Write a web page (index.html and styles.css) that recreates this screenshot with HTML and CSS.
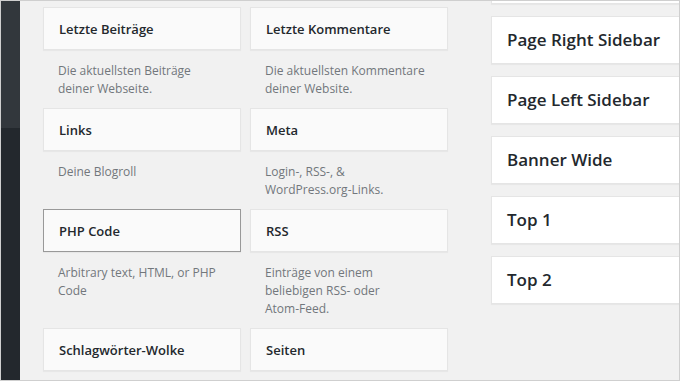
FILE: index.html
```html
<!DOCTYPE html>
<html lang="de">

<head>
  <meta charset="UTF-8">
  <title>Widgets</title>
  <link rel="stylesheet" href="styles.css">
</head>

<body>
  <div class="screen">
    <div class="adminmenu"></div>
    <div class="content">
      <div class="available">
        <div class="widget">
          <div class="widget-top"><h3>Letzte Beiträge</h3></div>
          <p class="desc">Die aktuellsten Beiträge<br>deiner Webseite.</p>
        </div>
        <div class="widget">
          <div class="widget-top"><h3>Letzte Kommentare</h3></div>
          <p class="desc">Die aktuellsten Kommentare<br>deiner Website.</p>
        </div>
        <div class="widget">
          <div class="widget-top"><h3>Links</h3></div>
          <p class="desc">Deine Blogroll</p>
        </div>
        <div class="widget">
          <div class="widget-top"><h3>Meta</h3></div>
          <p class="desc">Login-, RSS-, &amp;<br>WordPress.org-Links.</p>
        </div>
        <div class="widget">
          <div class="widget-top hover"><h3>PHP Code</h3></div>
          <p class="desc">Arbitrary text, HTML, or PHP<br>Code</p>
        </div>
        <div class="widget">
          <div class="widget-top"><h3>RSS</h3></div>
          <p class="desc">Einträge von einem<br>beliebigen RSS- oder<br>Atom-Feed.</p>
        </div>
        <div class="widget">
          <div class="widget-top"><h3>Schlagwörter-Wolke</h3></div>
        </div>
        <div class="widget">
          <div class="widget-top"><h3>Seiten</h3></div>
        </div>
      </div>
      <div class="sidebars">
        <div class="sidebar"></div>
        <div class="sidebar"><h2>Page Right Sidebar</h2></div>
        <div class="sidebar"><h2>Page Left Sidebar</h2></div>
        <div class="sidebar"><h2>Banner Wide</h2></div>
        <div class="sidebar"><h2>Top 1</h2></div>
        <div class="sidebar"><h2>Top 2</h2></div>
      </div>
    </div>
  </div>
</body>

</html>
```

FILE: styles.css
```css
html, body {
  margin: 0;
  padding: 0;
}

body {
  font-family: "Open Sans", "Liberation Sans", sans-serif;
  color: #23282d;
}

.screen {
  width: 680px;
  height: 381px;
  box-sizing: border-box;
  border: 1px solid #cfcfcf;
  display: flex;
  overflow: hidden;
  background-color: #f1f1f1;
}

.adminmenu {
  width: 19px;
  flex-shrink: 0;
  background: linear-gradient(#32373c 0, #32373c 127px, #23282d 127px);
}

.content {
  flex: 1;
  display: flex;
  align-items: flex-start;
  min-width: 0;
}

.available {
  display: grid;
  grid-template-columns: 198px 198px;
  column-gap: 9px;
  padding: 6px 0 0 23px;
  flex-shrink: 0;
}

.widget-top {
  height: 43px;
  box-sizing: border-box;
  display: flex;
  align-items: center;
  padding: 2px 15px 0;
  background-color: #fafafa;
  border: 1px solid #e5e5e5;
  box-shadow: 0 1px 1px rgba(0, 0, 0, 0.04);
}

.widget-top.hover {
  border-color: #999;
}

.widget-top h3 {
  margin: 0;
  font-size: 13px;
  font-weight: 600;
  line-height: 1.4;
}

.desc {
  margin: 0;
  padding: 12px 15px 10px;
  font-size: 12px;
  line-height: 18px;
  white-space: nowrap;
  color: #72777c;
}

.sidebars {
  display: flex;
  flex-direction: column;
  gap: 12px;
  margin: -45px 0 0 43px;
  width: 230px;
  flex-shrink: 0;
}

.sidebar {
  height: 48px;
  box-sizing: border-box;
  display: flex;
  align-items: center;
  padding: 0 15px;
  background-color: #fff;
  border: 1px solid #e5e5e5;
  box-shadow: 0 1px 1px rgba(0, 0, 0, 0.04);
}

.sidebar h2 {
  margin: 0;
  font-size: 17px;
  font-weight: 600;
  line-height: 1.4;
}
```
